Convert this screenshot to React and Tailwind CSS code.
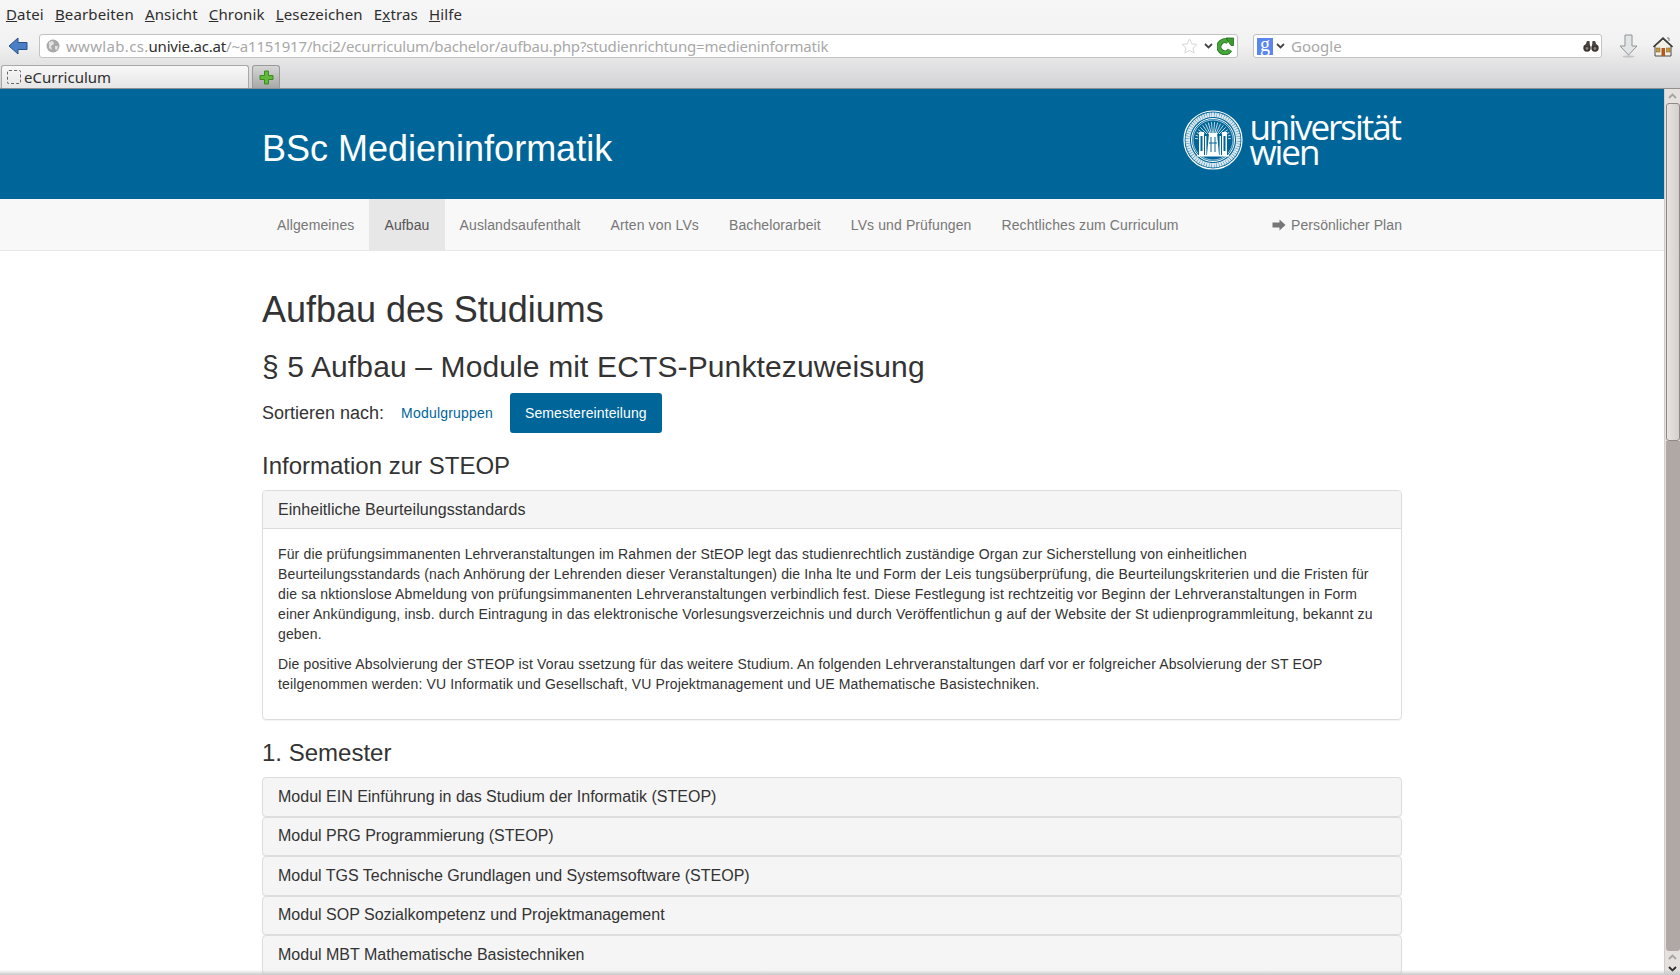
import React from 'react';

const menuItems = [
  ['D', 'atei'],
  ['B', 'earbeiten'],
  ['A', 'nsicht'],
  ['C', 'hronik'],
  ['L', 'esezeichen'],
];

const navItems = ['Allgemeines', 'Aufbau', 'Auslandsaufenthalt', 'Arten von LVs', 'Bachelorarbeit', 'LVs und Prüfungen', 'Rechtliches zum Curriculum'];

const modules = [
  'Modul EIN Einführung in das Studium der Informatik (STEOP)',
  'Modul PRG Programmierung (STEOP)',
  'Modul TGS Technische Grundlagen und Systemsoftware (STEOP)',
  'Modul SOP Sozialkompetenz und Projektmanagement',
  'Modul MBT Mathematische Basistechniken',
];

const BackIcon = () => (
  <svg width="20" height="18" viewBox="0 0 20 18">
    <path d="M10 1 L1 9 L10 17 V12.5 H19 V5.5 H10 Z" fill="#4a7fc4" stroke="#25508c" strokeWidth="1" />
  </svg>
);

const GlobeIcon = () => (
  <svg width="14" height="14" viewBox="0 0 14 14">
    <circle cx="7" cy="7" r="6.5" fill="#a9a9a9" />
    <path d="M3 3 L7 2 L8 5 L5 7 L6 11 L3 9 Z M9 7 L12 7 L11 11 L9 10 Z" fill="#e2e2e2" />
  </svg>
);

const Chevron = ({ color = '#444' }) => (
  <svg width="9" height="6" viewBox="0 0 9 6">
    <path d="M1 1 L4.5 4.5 L8 1" fill="none" stroke={color} strokeWidth="1.8" />
  </svg>
);

const StarIcon = () => (
  <svg width="17" height="16" viewBox="0 0 17 16">
    <path d="M8.5 1 L10.7 5.8 L16 6.4 L12 10 L13.2 15 L8.5 12.4 L3.8 15 L5 10 L1 6.4 L6.3 5.8 Z" fill="#fff" stroke="#d8d8d8" />
  </svg>
);

const ReloadIcon = () => (
  <svg width="17" height="18" viewBox="0 0 17 18">
    <path d="M13 13 A6 6 0 1 1 11 4.6" fill="none" stroke="#1f6b1a" strokeWidth="5" />
    <path d="M13 13 A6 6 0 1 1 11 4.6" fill="none" stroke="#46a63a" strokeWidth="3.4" />
    <path d="M9 1 H16.5 V8.5 L14 8.5 Z" fill="#3f9a32" stroke="#1f6b1a" strokeWidth="0.8" />
  </svg>
);

const BinocularsIcon = () => (
  <svg width="16" height="12" viewBox="0 0 16 12">
    <circle cx="4" cy="8" r="3.7" fill="#3c3632" />
    <circle cx="12" cy="8" r="3.7" fill="#3c3632" />
    <path d="M2 6 L4 1 H6.5 L7 6 Z M14 6 L12 1 H9.5 L9 6 Z" fill="#4a4440" />
    <circle cx="4" cy="8.5" r="1.4" fill="#8a817a" />
    <circle cx="12" cy="8.5" r="1.4" fill="#8a817a" />
  </svg>
);

const DownloadIcon = () => (
  <svg width="19" height="24" viewBox="0 0 19 24">
    <path d="M6 1 H13 V12 H18 L9.5 21 L1 12 H6 Z" fill="#e2e6e6" stroke="#8c9494" />
    <ellipse cx="9.5" cy="22.5" rx="6" ry="1.2" fill="#c4c4c6" />
  </svg>
);

const HomeIcon = () => (
  <svg width="20" height="21" viewBox="0 0 20 21">
    <path d="M2 10 V20 H18 V10 L10 3 Z" fill="#f3efe4" stroke="#4a4a4a" />
    <path d="M0.5 11 L10 2 L19.5 11" fill="none" stroke="#3c3c3c" strokeWidth="1.6" />
    <path d="M14 2 H16 V5" fill="none" stroke="#777" />
    <rect x="8.5" y="12" width="3.5" height="8" fill="#b5561c" />
    <rect x="3.5" y="12" width="3.5" height="4" fill="#c79a3c" stroke="#7a5a20" strokeWidth="0.5" />
    <rect x="13.5" y="12" width="3.5" height="4" fill="#c79a3c" stroke="#7a5a20" strokeWidth="0.5" />
  </svg>
);

const PlusIcon = () => (
  <svg width="15" height="15" viewBox="0 0 15 15">
    <path d="M5.5 1 H9.5 V5.5 H14 V9.5 H9.5 V14 H5.5 V9.5 H1 V5.5 H5.5 Z" fill="#62b83a" stroke="#3d8a22" />
  </svg>
);

const ArrowRightIcon = () => (
  <svg width="14" height="12" viewBox="0 0 14 12">
    <path d="M7.5 0.5 L13.5 6 L7.5 11.5 V8.5 H0.5 V3.5 H7.5 Z" fill="#777" />
  </svg>
);

// Siegel der Uni Wien, nur grob angenähert
const Seal = () => {
  const ticks = Array.from({ length: 64 }, (_, i) => i * 5.625);
  const rays = Array.from({ length: 18 }, (_, i) => -85 + i * 10);
  return (
    <svg width="60" height="60" viewBox="0 0 60 60">
      <circle cx="30" cy="30" r="29" fill="none" stroke="#fff" strokeWidth="1.2" />
      <circle cx="30" cy="30" r="21.5" fill="none" stroke="#fff" strokeWidth="1" />
      <circle cx="30" cy="30" r="20" fill="none" stroke="#fff" strokeWidth="0.6" />
      {ticks.map((a) => (
        <rect key={a} x="29" y="2.5" width="2.2" height="4.5" fill="#fff" opacity="0.85" transform={`rotate(${a} 30 30)`} />
      ))}
      {rays.map((a) => (
        <line key={a} x1="30" y1="30" x2="30" y2="12" stroke="#fff" strokeWidth="0.7" transform={`rotate(${a} 30 30)`} />
      ))}
      <rect x="15" y="24" width="30" height="20" fill="#006699" />
      <rect x="16" y="22" width="5" height="23" fill="#fff" />
      <rect x="39" y="22" width="5" height="23" fill="#fff" />
      <rect x="17.5" y="26" width="2" height="15" fill="#006699" />
      <rect x="40.5" y="26" width="2" height="15" fill="#006699" />
      <path d="M26 23 H34 L36 45 H24 Z" fill="#fff" />
      <path d="M28 27 V42 M32 27 V42 M26 33 H34" stroke="#006699" strokeWidth="1" />
      <rect x="22" y="26" width="1.4" height="19" fill="#fff" />
      <rect x="36.6" y="26" width="1.4" height="19" fill="#fff" />
      <rect x="14" y="45" width="32" height="1.5" fill="#fff" />
    </svg>
  );
};

const App = () => {
  return (
    <div className="h-[975px] w-[1680px] overflow-hidden flex flex-col relative font-['Liberation_Sans',sans-serif] text-[#333] bg-white">
      {/* Browserleiste */}
      <div className="h-[89px] shrink-0 flex flex-col bg-gradient-to-b from-[#f6f6f6] via-[#f2f2f2] to-[#d2d2d5] border-b border-[#8f8f8f] font-['Noto_Sans',sans-serif]">
        <div className="h-[29px] flex items-center gap-[11px] pl-[6px] text-[15px] tracking-[0.15px] text-[#2e2e2e]">
          {menuItems.map(([key, rest]) => (
            <span key={key}><u>{key}</u>{rest}</span>
          ))}
          <span>E<u>x</u>tras</span>
          <span><u>H</u>ilfe</span>
        </div>
        <div className="h-[36px] flex items-center pb-[2px]">
          <div className="w-[39px] flex justify-center pr-[4px]"><BackIcon /></div>
          <div className="w-[1199px] h-[24px] bg-white border border-[#c2c2c2] rounded-[3px] flex items-center pl-[6px] pr-[3px] text-[15px] text-[#a8a8a8]">
            <GlobeIcon />
            <span className="ml-[6px] flex-1 whitespace-nowrap tracking-[-0.17px]"><span className="tracking-[0.32px]">wwwlab.cs.</span><span className="text-[#2e2e2e] tracking-[-0.2px]">univie.ac.at</span>/~a1151917/hci2/ecurriculum/bachelor/aufbau.php?studienrichtung=medieninformatik</span>
            <StarIcon />
            <span className="ml-[6px] mr-[4px] flex"><Chevron /></span>
            <ReloadIcon />
          </div>
          <div className="ml-[15px] w-[349px] h-[24px] bg-white border border-[#c2c2c2] rounded-[3px] flex items-center pl-[3px] pr-[2px] text-[15px] text-[#a8a8a8]">
            <span className="w-[16px] h-[17px] bg-[#5b86ee] text-white text-[20px] leading-[13px] text-center font-['Liberation_Serif',serif]">g</span>
            <span className="ml-[3px] mr-[6px] flex"><Chevron /></span>
            <span className="flex-1">Google</span>
            <BinocularsIcon />
          </div>
          <div className="ml-[17px] flex"><DownloadIcon /></div>
          <div className="ml-[15px] flex"><HomeIcon /></div>
        </div>
        <div className="flex-1 flex items-end pl-px">
          <div className="w-[248px] h-[23px] bg-gradient-to-b from-[#f8f8f8] to-[#e6e6e6] border border-b-0 border-[#a8a8a8] rounded-t-[3px] flex items-center pl-[5px] text-[15px] text-[#2e2e2e]">
            <span className="w-[14px] h-[14px] border border-dashed border-[#666] rounded-[2px] mr-[3px]"></span>
            eCurriculum
          </div>
          <div className="ml-[3px] w-[28px] h-[23px] bg-gradient-to-b from-[#d6d6d6] to-[#a8a8a8] border border-b-0 border-[#9a9a9a] rounded-t-[3px] flex items-center justify-center">
            <PlusIcon />
          </div>
        </div>
      </div>

      <div className="flex-1 min-h-0 flex">
        <div className="flex-1 min-w-0 overflow-hidden">
          {/* Kopfbereich */}
          <header className="h-[110px] bg-[#006699]">
            <div className="w-[1140px] ml-[262px] h-full flex items-center justify-between">
              <h1 className="text-[36px] leading-[40px] text-white mt-[9px]">BSc Medieninformatik</h1>
              <div className="flex items-center gap-[6px] -mt-[9px] pr-[2px]">
                <Seal />
                <div className="font-['Open_Sans',sans-serif] text-white text-[35px] leading-[25px] tracking-[-2.05px] pb-[2px]">
                  <div>universität</div>
                  <div>wien</div>
                </div>
              </div>
            </div>
          </header>

          <nav className="h-[52px] bg-[#f8f8f8] border-b border-[#e7e7e7]">
            <div className="w-[1140px] ml-[262px] h-[51px] flex text-[14px] tracking-[0.11px] text-[#777]">
              {navItems.map((item) => (
                <span key={item} className={item === 'Aufbau' ? 'px-[15px] pt-px flex items-center bg-[#e7e7e7] text-[#555]' : 'px-[15px] pt-px flex items-center'}>{item}</span>
              ))}
              <span className="ml-auto pt-px flex items-center gap-[5px] tracking-[0.07px]"><ArrowRightIcon />Persönlicher Plan</span>
            </div>
          </nav>

          <main className="w-[1140px] ml-[262px] pt-[39px]">
            <h1 className="text-[36px] leading-[40px] tracking-[-0.03px] mb-[20px]">Aufbau des Studiums</h1>
            <h2 className="text-[30px] leading-[33px] tracking-[0.13px] mb-[10px]">§ 5 Aufbau – Module mit ECTS-Punktezuweisung</h2>
            <div className="flex items-center h-[40px]">
              <span className="text-[18px] mr-[1px]">Sortieren nach:</span>
              <span className="ml-[16px] text-[14px] tracking-[0.2px] text-[#006699]">Modulgruppen</span>
              <span className="ml-[17px] h-[40px] px-[15px] flex items-center rounded-[3px] bg-[#006699] text-white text-[14px] tracking-[0.1px]">Semestereinteilung</span>
            </div>
            <h3 className="text-[24px] leading-[26px] mt-[20px] mb-[11px]">Information zur STEOP</h3>

            <div className="border border-[#ddd] rounded-[4px] shadow-[0_1px_1px_rgba(0,0,0,0.05)] mb-[20px]">
              <div className="h-[38px] px-[15px] flex items-center bg-[#f5f5f5] border-b border-[#ddd] rounded-t-[3px] text-[16px] tracking-[0.06px]">Einheitliche Beurteilungsstandards</div>
              <div className="px-[15px] pt-[15px] pb-[25px] text-[14px] leading-[20px] tracking-[0.14px]">
                <p className="mb-[10px]">Für die prüfungsimmanenten Lehrveranstaltungen im Rahmen der StEOP legt das studienrechtlich zuständige Organ zur Sicherstellung von einheitlichen Beurteilungsstandards (nach Anhörung der Lehrenden dieser Veranstaltungen) die Inha lte und Form der Leis tungsüberprüfung, die Beurteilungskriterien und die Fristen für die sa nktionslose Abmeldung von prüfungsimmanenten Lehrveranstaltungen verbindlich fest. Diese Festlegung ist rechtzeitig vor Beginn der Lehrveranstaltungen in Form einer Ankündigung, insb. durch Eintragung in das elektronische Vorlesungsverzeichnis und durch Veröffentlichun g auf der Website der St udienprogrammleitung, bekannt zu geben.</p>
                <p>Die positive Absolvierung der STEOP ist Vorau ssetzung für das weitere Studium. An folgenden Lehrveranstaltungen darf vor er folgreicher Absolvierung der ST EOP teilgenommen werden: VU Informatik und Gesellschaft, VU Projektmanagement und UE Mathematische Basistechniken.</p>
              </div>
            </div>

            <h3 className="text-[24px] leading-[26px] mb-[11px]">1. Semester</h3>
            {modules.map((mod) => (
              <div key={mod} className="h-[39.5px] px-[15px] flex items-center bg-[#f5f5f5] border border-[#ddd] rounded-[4px] text-[16px] shadow-[0_1px_1px_rgba(0,0,0,0.05)]">{mod}</div>
            ))}
          </main>
        </div>

        {/* Scrollbar */}
        <div className="w-[16px] shrink-0 bg-[#e4e1df] flex flex-col items-center border-l border-[#d0cdcb]">
          <div className="h-[14px] flex items-center"><span className="rotate-180 flex"><Chevron color="#a5a5a5" /></span></div>
          <div className="w-[14px] h-[338px] bg-gradient-to-r from-[#e6e3e1] to-[#d4d0cd] border border-[#8f8985] rounded-[3px] shrink-0"></div>
          <div className="w-[14px] flex-1 bg-[#b0a8a5] rounded-b-[3px]"></div>
          <div className="h-[12px] flex items-center"><span className="rotate-180 flex"><Chevron color="#a5a5a5" /></span></div>
          <div className="h-[12px] flex items-center"><Chevron color="#2e2e2e" /></div>
        </div>
      </div>

      {/* Schatten am unteren Fensterrand */}
      <div className="absolute left-0 right-0 bottom-0 h-[5px] bg-gradient-to-b from-transparent to-[#c8c8c8]"></div>
    </div>
  );
};

export default App;
